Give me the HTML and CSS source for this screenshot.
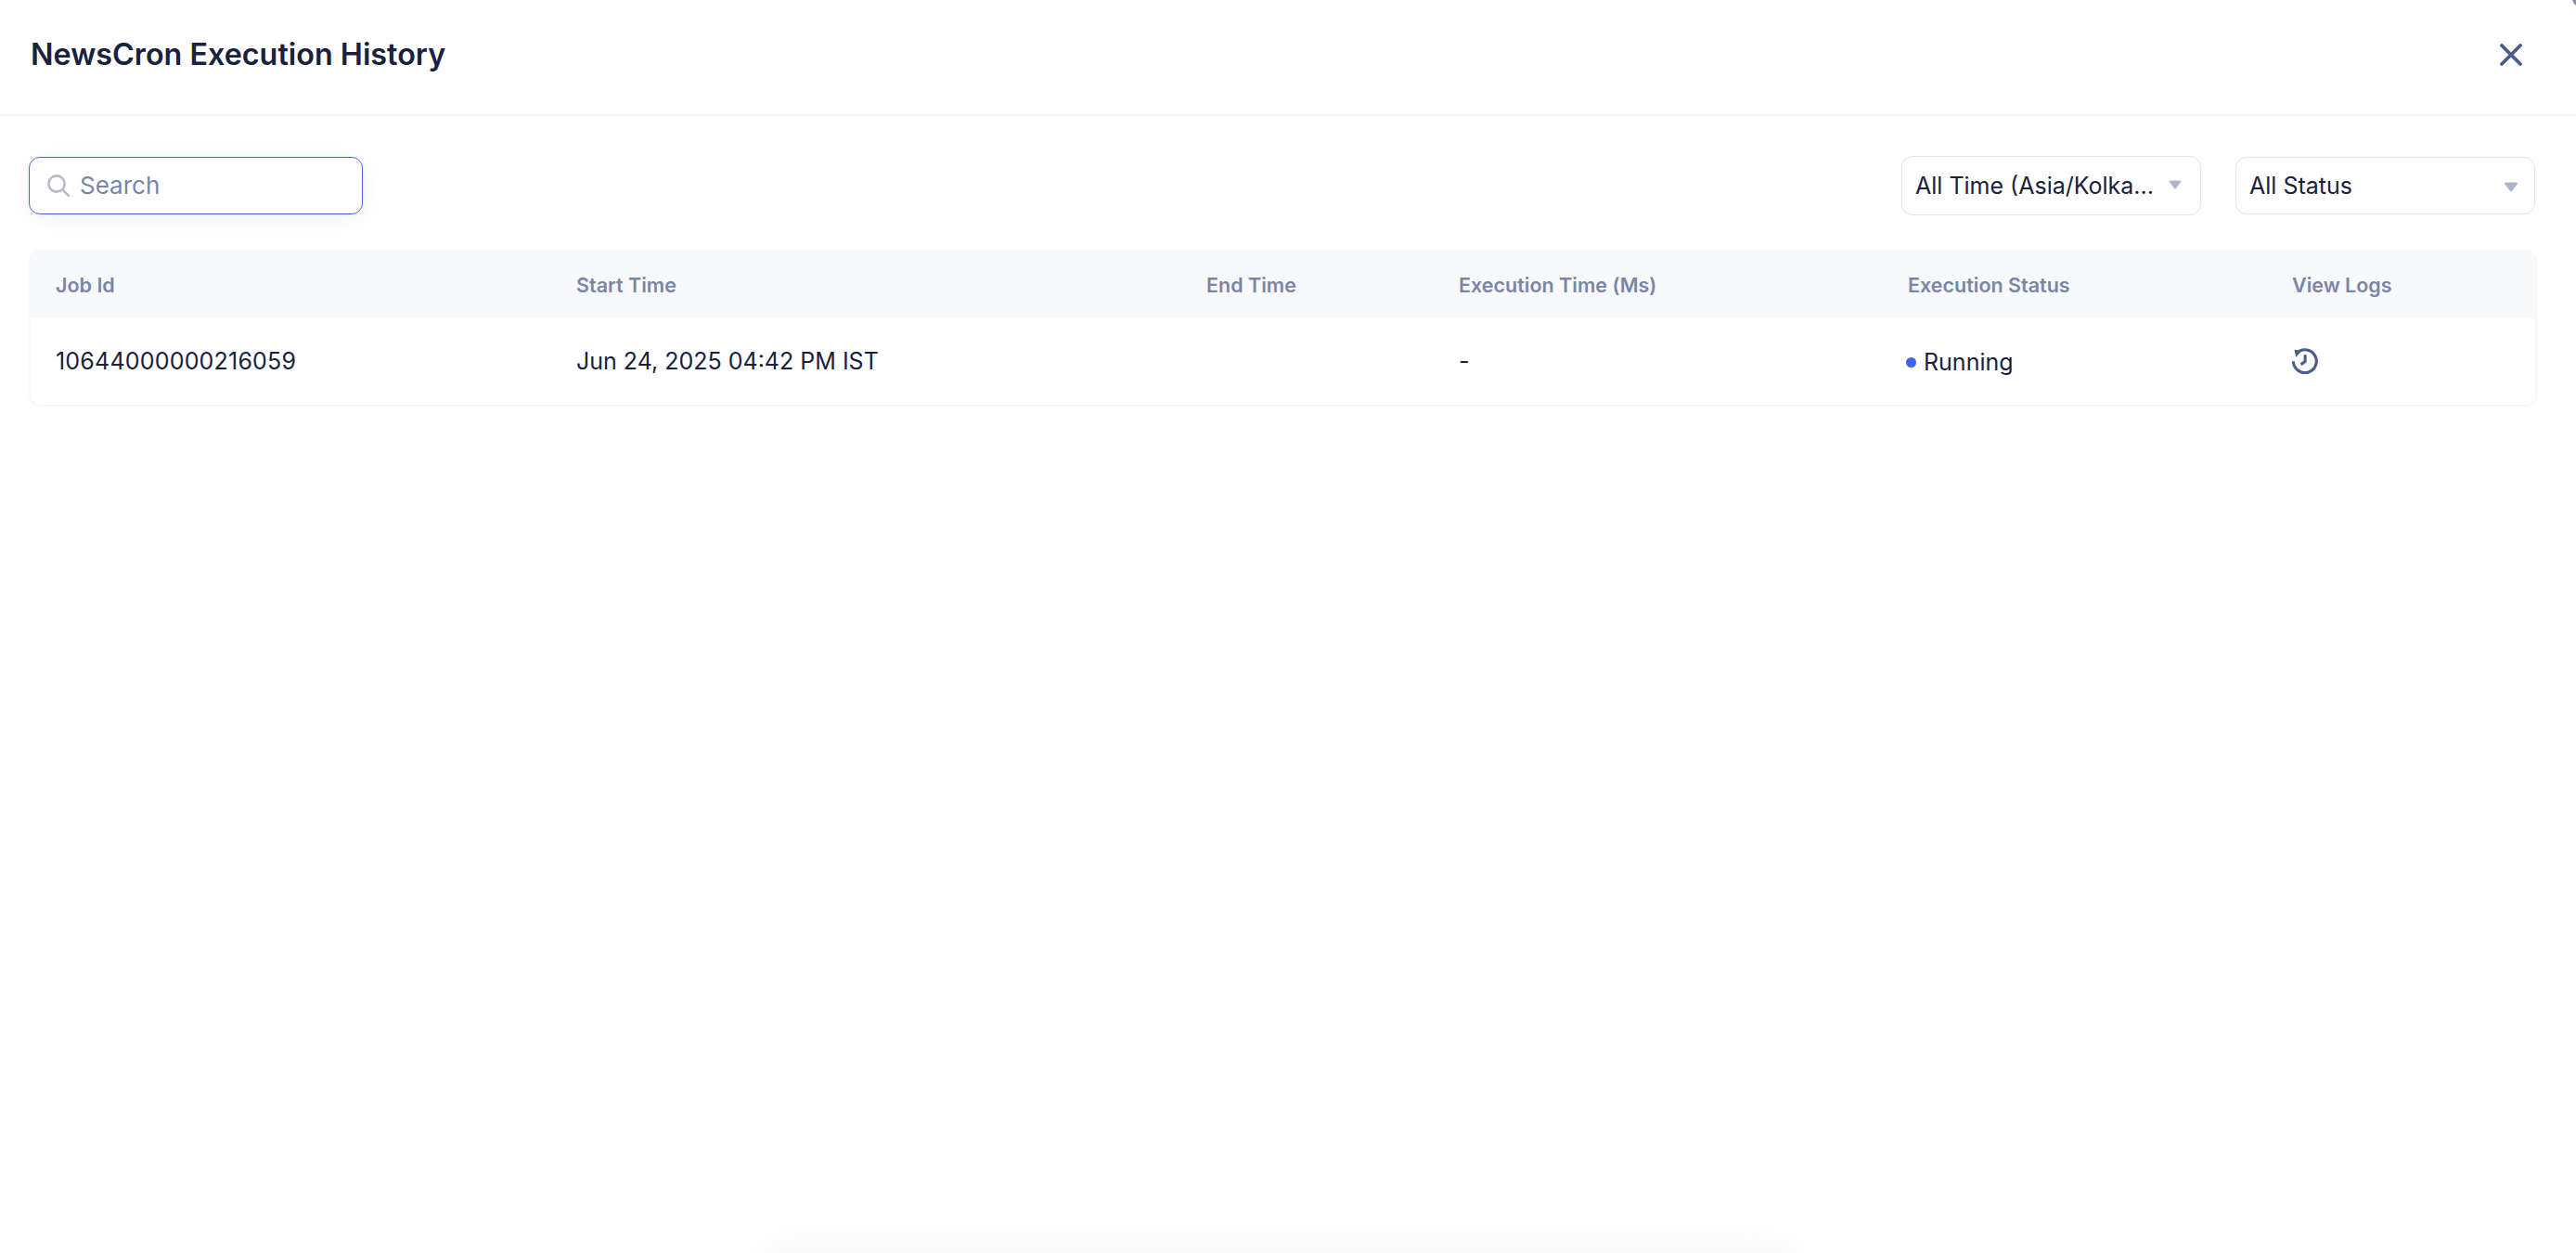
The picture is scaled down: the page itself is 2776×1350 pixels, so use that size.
FILE: index.html
```html
<!DOCTYPE html>
<html lang="en">
<head>
<meta charset="utf-8">
<title>NewsCron Execution History</title>
<link rel="stylesheet" href="styles.css">
</head>
<body>
<div class="modal">
  <header class="modal-header">
    <h1 class="modal-title">NewsCron Execution History</h1>
    <button class="close-btn" type="button" aria-label="Close">
      <svg class="close-icon" viewBox="0 0 24 24" aria-hidden="true"><path d="M2 2 22 22M22 2 2 22"/></svg>
    </button>
  </header>
  <section class="toolbar">
    <label class="search">
      <svg class="search-icon" viewBox="0 0 24 24" aria-hidden="true"><circle cx="10" cy="10" r="8.6"/><path d="M16.4 16.4 23 23"/></svg>
      <span class="search-placeholder">Search</span>
    </label>
    <div class="filters">
      <div class="select select-time">
        <span class="select-value">All Time (Asia/Kolka...</span>
        <svg class="caret" viewBox="0 0 14 10" aria-hidden="true"><path d="M1.6 0.5h10.8a1 1 0 0 1 .8 1.6L7.8 9a1 1 0 0 1-1.6 0L.8 2.1a1 1 0 0 1 .8-1.6z"/></svg>
      </div>
      <div class="select select-status">
        <span class="select-value">All Status</span>
        <svg class="caret" viewBox="0 0 14 10" aria-hidden="true"><path d="M1.6 0.5h10.8a1 1 0 0 1 .8 1.6L7.8 9a1 1 0 0 1-1.6 0L.8 2.1a1 1 0 0 1 .8-1.6z"/></svg>
      </div>
    </div>
  </section>
  <section class="table">
    <div class="row row-head">
      <div>Job Id</div>
      <div>Start Time</div>
      <div>End Time</div>
      <div>Execution Time (Ms)</div>
      <div>Execution Status</div>
      <div>View Logs</div>
    </div>
    <div class="row row-body">
      <div class="job-id">10644000000216059</div>
      <div>Jun 24, 2025 04:42 PM IST</div>
      <div></div>
      <div>-</div>
      <div class="status"><span class="status-dot"></span><span>Running</span></div>
      <div class="logs">
        <svg class="history-icon" viewBox="0 0 28 28" aria-hidden="true">
          <path d="M6.2 5.8A12 12 0 1 1 2.3 14.8"/>
          <path class="history-tip" d="M3.4 2.6 11 3.8 5 10.4z"/>
          <path d="M14.6 8v7l-4.4 3"/>
        </svg>
      </div>
    </div>
  </section>
</div>
<div class="bottom-glow"></div>
<svg class="corner" viewBox="0 0 4 6" aria-hidden="true"><path d="M0 0h4v6C2.5 4.5 1 2.5 0 0z"/></svg>
</body>
</html>
```
FILE: styles.css
```css
* { box-sizing: border-box; }
html, body { margin: 0; height: 100%; }
body {
  position: relative;
  overflow: hidden;
  background: #fff;
  color: #18223f;
  font-family: Inter, "Liberation Sans", sans-serif;
  font-size: 25px;
}
.modal { display: flex; flex-direction: column; }
.modal-header {
  height: 125px;
  padding: 0 58px 6px 33px;
  display: flex;
  align-items: center;
  justify-content: space-between;
  border-bottom: 2px solid #f3f4f8;
}
.modal-title { margin: 0; font-size: 32.3px; line-height: 40px; font-weight: 600; color: #18223f; }
.close-btn { padding: 0; border: 0; background: none; width: 24px; height: 24px; display: flex; }
.close-icon { width: 24px; height: 24px; fill: none; stroke: #4a5c8a; stroke-width: 3.8; stroke-linecap: round; }
.toolbar {
  padding: 43px 44px 37px 31px;
  display: flex;
  align-items: center;
  justify-content: space-between;
}
.search {
  width: 360px;
  height: 62px;
  padding-left: 19px;
  display: flex;
  align-items: center;
  gap: 11px;
  border: 1.5px solid #3f66de;
  border-radius: 12px;
  background: #fff;
  box-shadow: 0 4px 28px rgba(20, 30, 60, .06);
}
.search-icon { width: 24px; height: 24px; fill: none; stroke: #b4bbcf; stroke-width: 2.6; stroke-linecap: round; }
.search-placeholder { color: #7a86a8; font-size: 26px; line-height: 34px; }
.filters { display: flex; align-items: center; gap: 37px; }
.select {
  width: 323px;
  display: flex;
  align-items: center;
  justify-content: space-between;
  border: 1.5px solid #dfe2ef;
  border-radius: 12px;
  background: #fff;
}
.select-time { height: 64px; padding: 0 20px 0 14px; }
.select-status { height: 62px; padding: 0 17px 0 14px; }
.select-value { line-height: 34px; color: #18223f; white-space: nowrap; }
.caret { width: 14px; height: 10px; fill: #adb5cd; }
.select-time .caret { margin-top: -3px; }
.select-status .caret { margin-top: 3px; width: 16px; height: 11px; }
.table {
  width: 2703px;
  margin-left: 31px;
  border: 2px solid #f8f8fb;
  border-top: 0;
  border-radius: 12px;
  overflow: hidden;
}
.row {
  display: grid;
  grid-template-columns: 561px 679px 272px 484px 414px 1fr;
  align-items: center;
  padding-left: 27px;
}
.row-head {
  height: 74px;
  background: #f8f9fb;
  color: #7a86a6;
  font-size: 21.5px;
  font-weight: 600;
  padding-top: 1px;
}
.row-body { height: 93px; line-height: 34px; padding-bottom: 1px; }
.job-id { letter-spacing: .2px; }
.status { display: flex; align-items: center; gap: 8px; margin-left: -2px; padding-top: 2px; }
.status-dot { width: 11px; height: 11px; border-radius: 50%; background: #3f66e8; }
.logs { display: flex; align-items: center; margin-left: -1px; }
.history-icon { width: 29px; height: 29px; fill: none; stroke: #4a5c8a; stroke-width: 3; margin-bottom: 2px; }
.history-tip { fill: #4a5c8a; stroke: none; }
.bottom-glow {
  position: absolute;
  left: 815px;
  top: 1333px;
  width: 1125px;
  height: 70px;
  border-radius: 40px;
  background: #f9f9f9;
  filter: blur(14px);
}
.corner { position: absolute; top: 0; right: 0; width: 4px; height: 6px; fill: #8a8d9c; }
```
